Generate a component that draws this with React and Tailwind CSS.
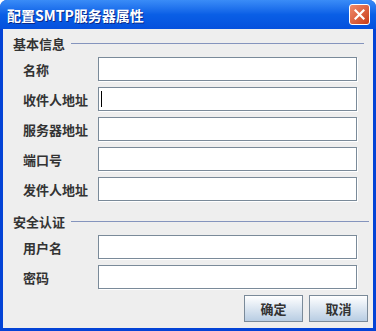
const font = { fontFamily: '"Noto Sans CJK SC", "Liberation Sans", sans-serif' };

const SectionTitle = ({ title, lineRight }) => (
  <div className="flex items-center h-[16px] pl-[10px]">
    <span className="text-[13px] font-bold text-[#333333] leading-none w-[58px]">
      {title}
    </span>
    <div className={`h-px bg-[#8494bd] flex-1 ${lineRight}`}></div>
  </div>
);

const Field = ({ label, cursor }) => (
  <div className="flex items-center h-[24px]">
    <span className="w-[95px] pl-[20px] text-[13px] font-bold text-[#333333] leading-none">
      {label}
    </span>
    <div className="relative w-[259px] h-[24px] bg-white border border-[#7a8a99] shadow-[1px_1px_0_#ffffff]">
      {cursor && (
        <div className="absolute left-[2px] top-[3px] w-px h-[16px] bg-black"></div>
      )}
    </div>
  </div>
);

const Button = ({ children }) => (
  <button className="w-[59px] h-[27px] border border-[#7a8a99] bg-gradient-to-b from-white to-[#b8cde3] text-[13px] font-bold text-[#333333] leading-none">
    {children}
  </button>
);

export default function App() {
  return (
    <div
      className="w-[376px] h-[331px] flex flex-col bg-[#0343d6] rounded-t-[7px] overflow-hidden"
      style={font}
    >
      {/* Title bar */}
      <div className="h-[29px] flex items-center justify-between pl-[7px] pr-[6px] bg-gradient-to-b from-[#3a8cf7] via-[#0a5fe6] to-[#0550dd]">
        <span className="text-white text-[14px] font-bold leading-none [text-shadow:1px_1px_#0b2a8a]">
          配置SMTP服务器属性
        </span>
        <div className="w-[21px] h-[21px] rounded-[3px] border border-white bg-gradient-to-br from-[#f08a6a] to-[#c83a14] flex items-center justify-center">
          <svg width="11" height="11" viewBox="0 0 11 11">
            <path
              d="M1.5 1.5 L9.5 9.5 M9.5 1.5 L1.5 9.5"
              stroke="white"
              strokeWidth="2.2"
              strokeLinecap="square"
            />
          </svg>
        </div>
      </div>

      {/* Body */}
      <div className="flex-1 mx-[3px] mb-[3px] bg-[#eeeeee] flex flex-col pt-[6px]">
        <SectionTitle title="基本信息" lineRight="mr-[9px]" />
        <div className="flex flex-col gap-[6px] mt-[6px]">
          <Field label="名称" />
          <Field label="收件人地址" cursor />
          <Field label="服务器地址" />
          <Field label="端口号" />
          <Field label="发件人地址" />
        </div>

        <div className="mt-[12px]">
          <SectionTitle title="安全认证" lineRight="mr-[4px]" />
        </div>
        <div className="flex flex-col gap-[6px] mt-[6px]">
          <Field label="用户名" />
          <Field label="密码" />
        </div>

        <div className="flex justify-end gap-[6px] mt-[6px] pr-[5px]">
          <Button>确定</Button>
          <Button>取消</Button>
        </div>
      </div>
    </div>
  );
}
